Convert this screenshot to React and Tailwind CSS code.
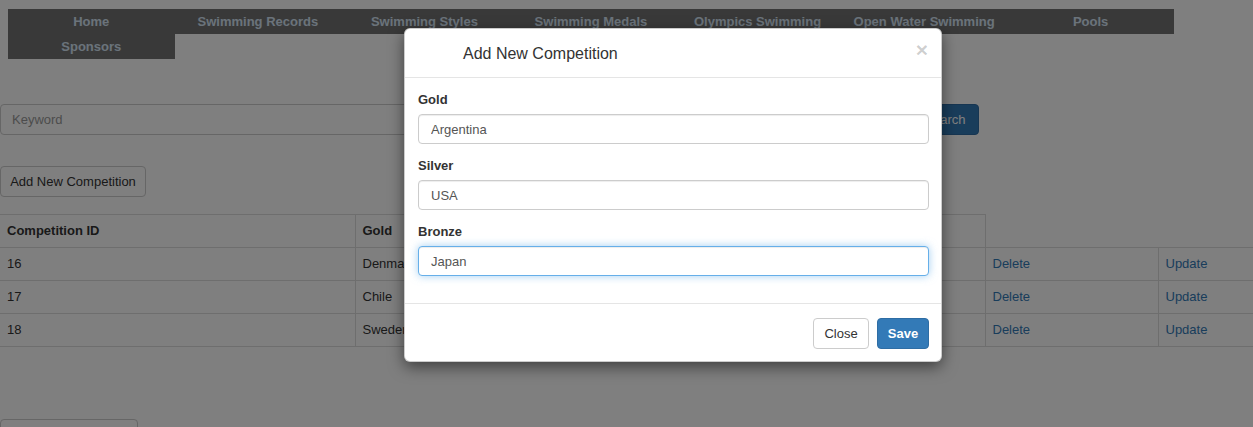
import React from "react";

const navItems = [
  "Home",
  "Swimming Records",
  "Swimming Styles",
  "Swimming Medals",
  "Olympics Swimming",
  "Open Water Swimming",
  "Pools",
  "Sponsors",
];

const rows = [
  { id: 16, gold: "Denmark", silver: "Brazil", bronze: "Italy" },
  { id: 17, gold: "Chile", silver: "Spain", bronze: "France" },
  { id: 18, gold: "Sweden", silver: "Norway", bronze: "Kenya" },
];

function Field({ label, value, focused }) {
  return (
    <div className="mb-[11px]">
      <label className="block font-bold text-[13px] leading-[22px] mb-[3px] text-[#333]">{label}</label>
      <input
        readOnly
        value={value}
        className={`block w-full h-[30px] px-[12px] text-[13px] text-[#555] bg-white rounded-[4px] border outline-none ${
          focused
            ? "border-[#66afe9] shadow-[inset_0_1px_1px_rgba(0,0,0,0.075),0_0_8px_rgba(102,175,233,0.6)]"
            : "border-[#ccc] shadow-[inset_0_1px_1px_rgba(0,0,0,0.075)]"
        }`}
      />
    </div>
  );
}

export default function App() {
  return (
    <div className="relative h-[427px] overflow-hidden bg-white text-[13px] text-[#333] font-['Liberation_Sans',Arial,sans-serif]">
      {/* --- Page --- */}
      <ul className="flex flex-wrap ml-[8px] pt-[9px] w-[1166px]">
        {navItems.map((item) => (
          <li
            key={item}
            className="w-[166.57px] h-[25px] leading-[25px] bg-[#737373] text-center font-bold text-[13px] text-[#d6e6f6]"
          >
            {item}
          </li>
        ))}
      </ul>

      <div className="flex mt-[45px]">
        <input
          readOnly
          placeholder="Keyword"
          className="w-[905px] h-[31px] px-[11px] border border-[#ccc] rounded-[4px] text-[13px] placeholder:text-[#999] outline-none"
        />
        <button className="ml-[6px] w-[68px] h-[31px] rounded-[4px] bg-[#337ab7] border border-[#2e6da4] text-white">
          Search
        </button>
      </div>

      <button className="mt-[31px] block w-[146px] h-[31px] border border-[#ccc] rounded-[4px] bg-white text-[#333]">
        Add New Competition
      </button>

      <table className="mt-[17px] w-full border-collapse">
        <thead>
          <tr className="h-[33px]">
            <th className="w-[355px] border border-l-0 border-[#ddd] px-[7px] text-left font-bold">Competition ID</th>
            <th className="w-[210px] border border-[#ddd] px-[7px] text-left font-bold">Gold</th>
            <th className="w-[210px] border border-[#ddd] px-[7px] text-left font-bold">Silver</th>
            <th className="w-[210px] border border-[#ddd] px-[7px] text-left font-bold">Bronze</th>
          </tr>
        </thead>
        <tbody>
          {rows.map((r) => (
            <tr key={r.id} className="h-[33px]">
              <td className="border border-l-0 border-[#ddd] px-[7px]">{r.id}</td>
              <td className="border border-[#ddd] px-[7px]">{r.gold}</td>
              <td className="border border-[#ddd] px-[7px]">{r.silver}</td>
              <td className="border border-[#ddd] px-[7px]">{r.bronze}</td>
              <td className="w-[173px] border border-[#ddd] px-[7px] text-[#337ab7]">Delete</td>
              <td className="border border-r-0 border-[#ddd] px-[7px] text-[#337ab7]">Update</td>
            </tr>
          ))}
        </tbody>
      </table>

      <button
        aria-label="Back"
        className="mt-[72px] block w-[138px] h-[31px] border border-[#ccc] rounded-[4px] bg-white"
      />

      {/* --- Backdrop --- */}
      <div className="absolute inset-0 bg-black/50" />

      {/* --- Modal --- */}
      <div className="absolute left-[404px] top-[28px] w-[538px] bg-white rounded-[6px] border border-black/20 shadow-[0_5px_15px_rgba(0,0,0,0.5)]">
        <div className="flex items-center justify-between h-[49px] border-b border-[#e5e5e5] pl-[58px] pr-[13px] pt-[2px]">
          <h4 className="text-[16px] text-[#333]">Add New Competition</h4>
          <span className="text-[21px] font-bold leading-none text-black/20 -mt-[10px]">×</span>
        </div>
        <div className="pt-[11px] pb-[16px] pl-[13px] pr-[12px]">
          <Field label="Gold" value="Argentina" />
          <Field label="Silver" value="USA" />
          <Field label="Bronze" value="Japan" focused />
        </div>
        <div className="flex justify-end gap-[8px] border-t border-[#e5e5e5] pt-[14px] pb-[12px] pr-[12px]">
          <button className="w-[56px] h-[31px] border border-[#ccc] rounded-[4px] bg-white text-[#333]">Close</button>
          <button className="w-[52px] h-[31px] border border-[#2e6da4] rounded-[4px] bg-[#337ab7] text-white font-bold">Save</button>
        </div>
      </div>
    </div>
  );
}
